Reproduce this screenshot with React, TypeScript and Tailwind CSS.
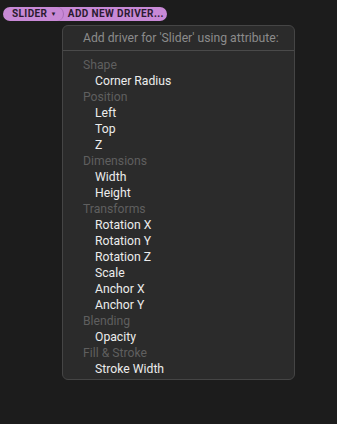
const groups: { title: string; items: string[] }[] = [
  { title: "Shape", items: ["Corner Radius"] },
  { title: "Position", items: ["Left", "Top", "Z"] },
  { title: "Dimensions", items: ["Width", "Height"] },
  { title: "Transforms", items: ["Rotation X", "Rotation Y", "Rotation Z", "Scale", "Anchor X", "Anchor Y"] },
  { title: "Blending", items: ["Opacity"] },
  { title: "Fill & Stroke", items: ["Stroke Width"] },
];

export default function App() {
  return (
    <div className="w-[337px] h-[424px] bg-[#1c1c1c] overflow-hidden font-['Roboto',sans-serif]">
      <div className="flex pt-[7px] pl-[3px]">
        <div className="flex h-[14px] rounded-full bg-[#c889d6] text-[#2b1b31] text-[10px] font-bold leading-[14px] tracking-[0.4px] whitespace-nowrap">
          <div className="flex items-center gap-[3px] pl-[9px] pr-[6px] rounded-full border-r border-[#a86db6]">
            <span>SLIDER</span>
            <span className="text-[6px]">▼</span>
          </div>
          <div className="pl-[4px] pr-[3px]">ADD NEW DRIVER...</div>
        </div>
      </div>
      <div className="ml-[62px] mt-[4px] w-[233px] h-[355px] rounded-[6px] border border-[#454545] bg-[#2b2b2b]">
        <div className="h-[24px] pl-[20px] pt-[2px] text-[12.2px] leading-[20px] text-[#8b8b8b] whitespace-nowrap">
          Add driver for 'Slider' using attribute:
        </div>
        <div className="h-[1px] bg-[#4a4a4a]" />
        <div className="pt-[6px] text-[12.2px] leading-[16px]">
          {groups.map((g) => (
            <div key={g.title}>
              <div className="pl-[20px] text-[#5f5f5f]">{g.title}</div>
              {g.items.map((it) => (
                <div key={it} className="pl-[32px] text-[#ececec]">{it}</div>
              ))}
            </div>
          ))}
        </div>
      </div>
    </div>
  );
}
